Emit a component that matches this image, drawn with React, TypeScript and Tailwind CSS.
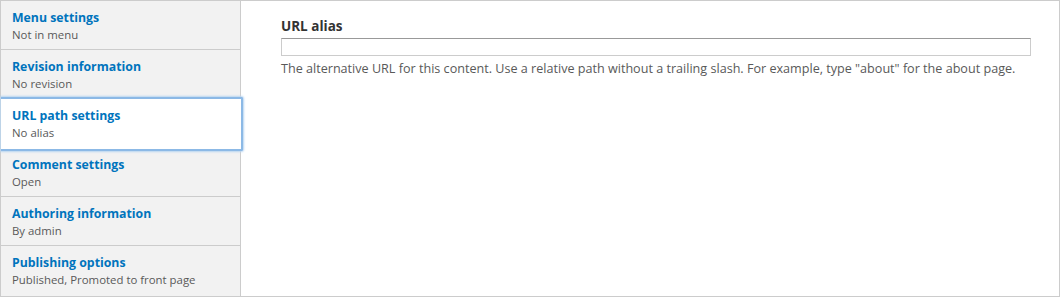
export default function App() {
  const tabs = [
    { title: 'Menu settings', summary: 'Not in menu' },
    { title: 'Revision information', summary: 'No revision' },
    { title: 'URL path settings', summary: 'No alias', selected: true },
    { title: 'Comment settings', summary: 'Open' },
    { title: 'Authoring information', summary: 'By admin' },
    { title: 'Publishing options', summary: 'Published, Promoted to front page' },
  ];

  return (
    <div className="w-[1062px] h-[299px] bg-white" style={{ fontFamily: '"Open Sans", sans-serif' }}>
      <div className="flex w-[1060px] h-[297px] border border-[#ccc]">
        {/* vertical tabs */}
        <ul className="w-[240px] shrink-0 bg-[#f2f2f2] border-r border-[#ccc]">
          {tabs.map((t) =>
            t.selected ? (
              <li key={t.title} className="relative h-[49px] border-b border-[#ccc]">
                <div className="absolute left-0 -right-[3px] -top-[2px] -bottom-[4px] bg-white border-2 border-l-0 border-[#8cb9e6] rounded-r-[2px] shadow-[0_0_2px_1px_#b8d5f1] z-10 pl-[11px] pt-[9px]">
                  <div className="text-[12.3px] font-bold text-[#0074bd] leading-[16px]">{t.title}</div>
                  <div className="text-[11.4px] text-[#595959] leading-[16px] mt-[1px]">{t.summary}</div>
                </div>
              </li>
            ) : (
              <li key={t.title} className="h-[49px] border-b border-[#ccc] last:border-b-0 pl-[11px] pt-[9px]">
                <div className="text-[12.3px] font-bold text-[#0074bd] leading-[16px]">{t.title}</div>
                <div className="text-[11.4px] text-[#595959] leading-[16px] mt-[1px]">{t.summary}</div>
              </li>
            )
          )}
        </ul>

        {/* pane */}
        <div className="flex-1 pl-[40px] pr-[28px] pt-[16px]">
          <label className="block text-[13.5px] font-bold text-[#333] leading-[18px]">URL alias</label>
          <input
            type="text"
            className="mt-[3px] block w-full h-[18px] border border-[#ccc] border-t-[#999] bg-white outline-none"
          />
          <p className="mt-[5px] text-[12.6px] text-[#595959] leading-[16px]">
            The alternative URL for this content. Use a relative path without a trailing slash. For example, type "about" for the about page.
          </p>
        </div>
      </div>
    </div>
  );
}
